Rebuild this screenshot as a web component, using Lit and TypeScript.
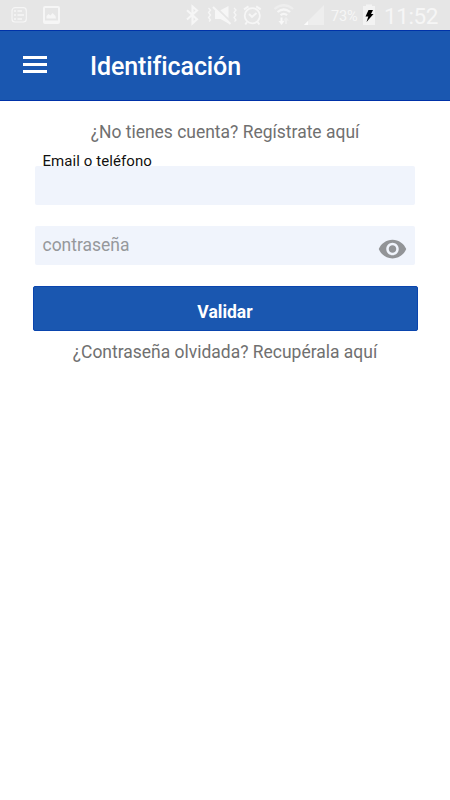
import { LitElement, html, css, svg } from "lit";
import { customElement } from "lit/decorators.js";

@customElement("status-bar")
class StatusBar extends LitElement {
  static styles = css`
    :host { display: flex; height: 30px; background: #e6e6e6; color: #f6f6f6; font-family: Roboto, sans-serif; overflow: hidden; box-sizing: border-box; padding-left: 8px; }
    svg { display: block; height: 30px; flex: none; }
    .spacer { flex: 1; }
    .percent { width: 32px; font-size: 14.5px; line-height: 33px; letter-spacing: -0.1px; white-space: nowrap; }
    .clock { width: 66px; font-size: 22.5px; line-height: 33px; letter-spacing: -0.4px; white-space: nowrap; }
    .faint { fill: #eeeeee; }
  `;
  icon(x: number, w: number, body: unknown) {
    return html`<svg width=${w} height="30" viewBox="${x} 0 ${w} 30" fill="none" stroke="#f6f6f6" stroke-width="1.6">${body}</svg>`;
  }
  render() {
    return html`
      ${this.icon(8, 26, svg`<rect x="12" y="7.7" width="14.3" height="14.3" rx="3" stroke-width="1.2"/><path d="M14 11h2m1.500 0h4.500M14 15h2m1.500 0h6.500M14 19h2m1.500 0h4.500" stroke-width="1.7"/>`)}
      ${this.icon(34, 32, svg`<path d="M45 6h13a2 2 0 0 1 2 2v14a2 2 0 0 1-2 2H45a2 2 0 0 1-2-2V8a2 2 0 0 1 2-2zM45 8v12.5h13V8z" fill="#f6f6f6" fill-rule="evenodd" stroke="none"/><path d="M46.500 18.500v-2.500l2-2 2 1.500 2-2.500 2 2 1 1 .5 2.500z" fill="#f6f6f6" stroke="none"/>`)}
      <div class="spacer"></div>
      ${this.icon(180, 24, svg`<path d="M187 10.300l10 9-4.500 4V6.500l4.500 4-10 9" stroke-width="2.100"/>`)}
      ${this.icon(204, 36, svg`<path d="M215 10.500h5l8.500-4.500v17.500l-8-4.500h-5.500z" fill="#f6f6f6" stroke="none"/><path d="M214 5.500l18 17.500" stroke="#e6e6e6" stroke-width="2"/><path d="M213 7l17.500 17" stroke-width="2"/><path d="M208.500 8l2 2-2 2.500 2 2.500-2 2.500 2 2.500-1.500 1.500M234 8l2 2-2 2.500 2 2.500-2 2.500 2 2.500-1.500 1.500" stroke-width="1.300"/>`)}
      ${this.icon(240, 26, svg`<circle cx="252.300" cy="15.800" r="7.600" stroke-width="1.800"/><path d="M249 14l3 3 4.500-4M244 9.300l4.500-3M260.700 9.300l-4.500-3M247 22l-1.700 2.500M257.600 22l1.700 2.500" stroke-width="2"/>`)}
      ${this.icon(266, 34, svg`<path d="M274.500 9q9.300-7.500 18.600 0" stroke="#eeeeee" stroke-width="2.200"/><path d="M277.500 12q6.300-5 12.600 0M280.500 15.200q3.300-2.500 6.600 0" stroke-width="2.200"/><path d="M280.500 17.500h2V21h2l-3 4-3-4h2z" fill="#f8f8f8" stroke="none"/><path d="M287 24v-3.500h2l-3-3.500-3 3.500h2V24z" class="faint" stroke="none"/>`)}
      ${this.icon(300, 31, svg`<path d="M304 25L324 5v20z" class="faint" stroke="none"/><path d="M304 25l4-4v4z" fill="#fbfbfb" stroke="none"/>`)}
      <div class="percent">73%</div>
      ${this.icon(363, 21, svg`<path d="M363 6h3V4.500h6V6h3v19h-12z" fill="#f3f3f3" stroke="none"/><path d="M368.500 10h4.500l-2 4h2.500l-7 8 1.800-5.500h-2.800z" fill="#000" stroke="none"/>`)}
      <div class="clock">11:52</div>
    `;
  }
}

@customElement("app-root")
class AppRoot extends LitElement {
  static styles = css`
    :host { display: block; height: 800px; background: #fff; font-family: Roboto, sans-serif; overflow: hidden; }
    .bar { height: 71px; box-sizing: border-box; display: flex; align-items: center; background: #1a57b0; border-top: 1px solid #0032a8; border-bottom: 1px solid #0032a8; padding-left: 23px; }
    .menu { display: grid; gap: 4.700px; width: 24px; margin-right: 43px; margin-top: -2px; }
    .menu i { height: 2.400px; background: #fff; }
    h1 { margin: 3px 0 0; color: #fff; font-size: 25px; line-height: 30px; font-weight: 500; letter-spacing: -0.100px; white-space: nowrap; }
    .link { text-align: center; color: #707070; font-size: 17.480px; line-height: 22px; white-space: nowrap; }
    .signup { margin-top: 20px; }
    .recover { margin-top: 10px; }
    label { display: block; margin: 8px 0 0 42.500px; height: 15px; line-height: 20px; font-size: 15px; letter-spacing: 0.080px; color: #111; }
    .field { display: flex; align-items: center; justify-content: space-between; box-sizing: border-box; height: 39px; margin: 0 35px; padding: 0 8px 0 7.500px; background: #f0f4fc; border-radius: 2px; }
    .password { margin-top: 21px; color: #96989b; font-size: 17.480px; line-height: 20px; }
    .password span { margin-top: -1px; }
    .field svg { display: block; margin-top: 6px; }
    button { display: block; box-sizing: border-box; width: 385px; height: 45px; margin: 21px 0 0 32.500px; padding: 6px 0 0; border: 1px solid #0a45ae; border-radius: 2px; background: #1a57b0; color: #fff; font: 700 17.500px/22px Roboto, sans-serif; }
  `;
  render() {
    return html`
      <status-bar></status-bar>
      <header class="bar"><div class="menu"><i></i><i></i><i></i></div><h1>Identificación</h1></header>
      <div class="link signup">¿No tienes cuenta? Regístrate aquí</div>
      <label>Email o teléfono</label>
      <div class="field"></div>
      <div class="field password"><span>contraseña</span>
        <svg width="29" height="20" viewBox="0.500 4 23 16"><path fill="#929497" d="M12 4.500C7 4.500 2.730 7.610 1 12c1.730 4.390 6 7.500 11 7.500s9.270-3.110 11-7.500c-1.730-4.390-6-7.500-11-7.500zM12 17c-2.760 0-5-2.240-5-5s2.240-5 5-5 5 2.240 5 5-2.240 5-5 5zm0-8c-1.660 0-3 1.340-3 3s1.340 3 3 3 3-1.340 3-3-1.340-3-3-3z"/></svg>
      </div>
      <button>Validar</button>
      <div class="link recover">¿Contraseña olvidada? Recupérala aquí</div>
    `;
  }
}
